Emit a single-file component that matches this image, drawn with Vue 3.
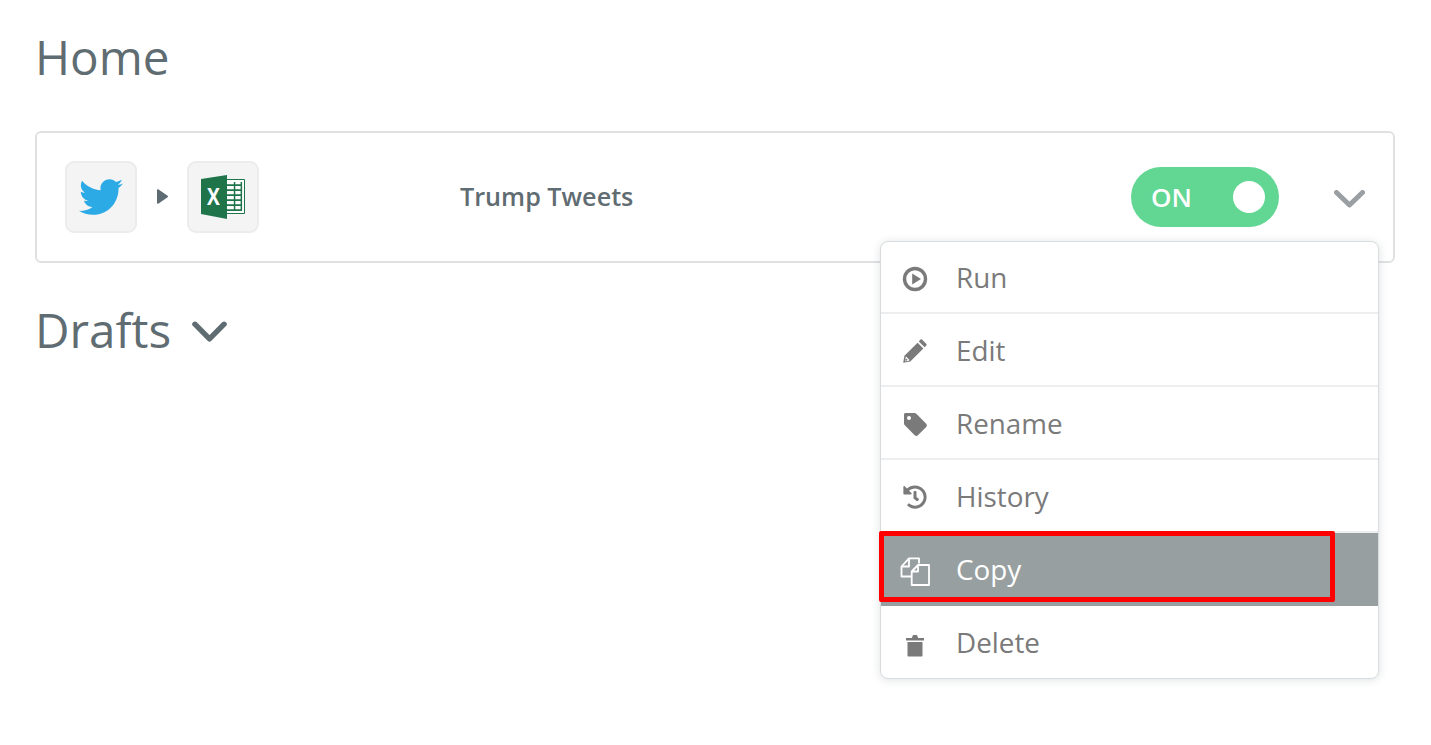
<template>
  <div class="page">
    <h1 class="title">Home</h1>

    <div class="card">
      <div class="apps">
        <div class="app-box">
          <svg class="twitter" viewBox="0 0 512 512"><path fill="#2caae6" d="M459.37 151.716c.325 4.548.325 9.097.325 13.645 0 138.72-105.583 298.558-298.558 298.558-59.452 0-114.68-17.219-161.137-47.106 8.447.974 16.568 1.299 25.34 1.299 49.055 0 94.213-16.568 130.274-44.832-46.132-.975-84.792-31.188-98.112-72.772 6.498.974 12.995 1.624 19.818 1.624 9.421 0 18.843-1.3 27.614-3.573-48.081-9.747-84.143-51.98-84.143-102.985v-1.299c13.969 7.797 30.214 12.67 47.431 13.319-28.264-18.843-46.781-51.005-46.781-87.391 0-19.492 5.197-37.36 14.294-52.954 51.655 63.675 129.3 105.258 216.365 109.807-1.624-7.797-2.599-15.918-2.599-24.04 0-57.828 46.782-104.934 104.934-104.934 30.213 0 57.502 12.67 76.67 33.137 23.715-4.548 46.456-13.645 66.599-25.34-7.798 24.366-24.366 44.833-46.132 57.827 21.117-2.273 41.584-8.122 60.426-16.243-14.292 20.791-32.161 39.308-52.628 54.253z"/></svg>
        </div>
        <svg class="arrow" viewBox="0 0 11 15"><path fill="#5f6b72" d="M0 1.2v12.6c0 .9.9 1.3 1.6.8L10.600 8.300c.5-.4.5-1.200 0-1.600L1.600.4C.9-.1 0 .3 0 1.200z"/></svg>
        <div class="app-box">
          <svg class="excel" viewBox="0 0 44 44">
            <path fill="#fff" stroke="#20744a" stroke-width="1" d="M24 4.500h19.500v34H24z"/>
            <path fill="#20744a" d="M26 9.300h15v1.600H26zM26 14.300h15v1.600H26zM26 19.300h15v1.600H26zM26 24.300h15v1.600H26zM26 29.300h15v1.600H26zM26 34.300h15v1.600H26zM32.800 7h1.500v28h-1.500zM39.600 7h1.500v28h-1.500z"/>
            <path fill="#20744a" d="M0 4 26 0v44L0 39z"/>
            <text x="0" y="0" transform="translate(12.500 29.500) scale(.8 1)" text-anchor="middle" class="excel-x">X</text>
          </svg>
        </div>
      </div>
      <div class="name">Trump Tweets</div>
      <div class="toggle">
        <span>ON</span>
        <i class="knob"></i>
      </div>
      <svg class="chevron" viewBox="0 0 31 18"><path d="M2.500 2.500 15.500 15 28.500 2.500" fill="none" stroke="#9a9fa3" stroke-width="5" stroke-linecap="round" stroke-linejoin="round"/></svg>

      <div class="menu">
        <div v-for="item in items" :key="item.label" class="row" :class="{ active: item.active }">
          <svg class="icon" viewBox="0 0 24 24" v-html="item.icon"></svg>
          <span>{{ item.label }}</span>
        </div>
        <div class="highlight"></div>
      </div>
    </div>

    <h2 class="drafts">
      Drafts
      <svg viewBox="0 0 36 22"><path d="M3 3 18 18 33 3" fill="none" stroke="#5f6c72" stroke-width="5.500" stroke-linecap="round" stroke-linejoin="round"/></svg>
    </h2>
  </div>
</template>

<script setup>
const items = [
  {
    label: 'Run',
    icon: '<circle cx="12" cy="12" r="10.500" fill="none" stroke="currentColor" stroke-width="3.400"/><path fill="currentColor" d="M9.200 6.400v11.200L18 12z"/>'
  },
  {
    label: 'Edit',
    icon: '<path fill="currentColor" d="M19 .6 23.400 5c.4.400.4 1 0 1.400l-1.800 1.800-5.800-5.800L17.600.6c.4-.4 1-.4 1.400 0zM14.600 3.700l5.800 5.800L7.300 22.600.2 23.800l1.200-7z"/><path fill="#fff" d="M3 17.500 6.500 21 5.400 21.900 2.100 22.300 2.500 18.800z"/><circle cx="3.300" cy="20.800" r="1" fill="currentColor"/>'
  },
  {
    label: 'Rename',
    icon: '<path fill="currentColor" fill-rule="evenodd" d="M2.500 1h9c.7 0 1.300.3 1.800.8l9.900 9.900c.9.900.9 2.300 0 3.200l-8.300 8.300c-.9.900-2.300.9-3.200 0L1.800 13.300C1.300 12.800 1 12.200 1 11.500v-9C1 1.700 1.700 1 2.500 1zM6 4a2 2 0 1 0 0 4 2 2 0 0 0 0-4z"/>'
  },
  {
    label: 'History',
    icon: '<g transform="scale(.0469)"><path fill="currentColor" d="M504 255.531c.253 136.64-111.18 248.372-247.82 248.468-59.015.042-113.223-20.53-155.822-54.911-11.077-8.94-11.905-25.541-1.839-35.607l11.267-11.267c8.609-8.609 22.353-9.551 31.891-1.984C173.062 425.135 212.781 440 256 440c101.705 0 184-82.311 184-184 0-101.705-82.311-184-184-184-48.814 0-93.149 18.969-126.068 49.932l50.754 50.754c10.08 10.08 2.941 27.314-11.313 27.314H24c-8.837 0-16-7.163-16-16V38.627c0-14.254 17.234-21.393 27.314-11.314l49.372 49.372C129.209 34.136 189.552 8 256 8c136.81 0 247.747 110.78 248 247.531zm-180.912 78.784l9.823-12.63c8.138-10.463 6.253-25.542-4.21-33.679L288 256.349V152c0-13.255-10.745-24-24-24h-16c-13.255 0-24 10.745-24 24v135.651l65.409 50.874c10.463 8.137 25.541 6.253 33.679-4.21z"/></g>'
  },
  {
    label: 'Copy',
    active: true,
    icon: '<path fill="none" stroke="currentColor" stroke-width="1.800" stroke-linejoin="round" d="M16 4.500V-.7H6L-1.500 7.500V17.500H8.700"/><path fill="none" stroke="currentColor" stroke-width="1.800" stroke-linejoin="round" d="M6 0V7.500H-1M8.700 26V12.500L15 6H26V26zM15 6.500V12.500H9"/>'
  },
  {
    label: 'Delete',
    icon: '<path fill="currentColor" d="M3 6h5.800l1-2.600c.1-.3.400-.5.700-.5h3c.3 0 .6.200.7.500l1 2.600H21v2.400H3zM4.500 10h15v13.500c0 .6-.4 1-1 1h-13c-.6 0-1-.4-1-1z"/>'
  }
]
</script>

<style scoped>
.page {
  min-height: 745px;
  box-sizing: border-box;
  padding: 25px 36px 0 35px;
  font-family: "Open Sans", sans-serif;
  color: #5f6c72;
}

.title {
  margin: 0 0 42px 0;
  font-size: 47.6px;
  font-weight: 400;
  line-height: 64px;
}

.card {
  position: relative;
  display: flex;
  align-items: center;
  height: 132px;
  box-sizing: border-box;
  padding: 0 28px 0 28px;
  border: 2px solid #dfe1e2;
  border-radius: 6px;
}

.apps {
  display: flex;
  align-items: center;
  width: 395px;
}

.app-box {
  display: flex;
  align-items: center;
  justify-content: center;
  width: 72px;
  height: 72px;
  box-sizing: border-box;
  background: #f4f4f4;
  border: 2px solid #ececec;
  border-radius: 9px;
}

.twitter {
  width: 44px;
  height: 44px;
}

.excel {
  width: 44px;
  height: 44px;
}

.excel-x {
  font-family: "Open Sans", sans-serif;
  font-weight: 700;
  font-size: 24px;
  fill: #fff;
}

.arrow {
  width: 11px;
  height: 15px;
  margin: -2px 19px 0 20px;
}

.name {
  flex: 1;
  font-size: 25.2px;
  font-weight: 600;
  margin-top: -2px;
}

.toggle {
  display: flex;
  align-items: center;
  justify-content: space-between;
  width: 148px;
  height: 60px;
  box-sizing: border-box;
  padding: 0 14px 0 20px;
  background: #62d693;
  border-radius: 30px;
  color: #fff;
  font-size: 26px;
  font-weight: 600;
}

.knob {
  width: 32px;
  height: 32px;
  background: #fff;
  border-radius: 50%;
}

.chevron {
  width: 31px;
  height: 18px;
  margin-left: 55px;
  margin-top: 3px;
}

.menu {
  position: absolute;
  top: 108px;
  right: 14px;
  width: 499px;
  box-sizing: border-box;
  background: #fff;
  border: 1px solid #d9dcde;
  border-radius: 8px;
  box-shadow: 0 1px 8px rgba(90, 100, 110, 0.2);
  color: #7a7a7a;
  font-size: 27.8px;
  z-index: 2;
}

.row {
  display: flex;
  align-items: center;
  height: 73px;
  box-sizing: border-box;
  padding-left: 22px;
  border-bottom: 2px solid #eceeef;
}

.row:first-child {
  height: 72px;
}

.row:nth-last-child(2) {
  height: 72px;
  border-bottom: none;
}

.row.active {
  background: #989fa1;
  color: #fff;
  border-bottom: none;
}

.row.active span {
  margin-top: -2px;
}

.icon {
  width: 24px;
  height: 24px;
  margin: 3px 29px 0 0;
  flex-shrink: 0;
  overflow: visible;
}

.highlight {
  position: absolute;
  left: -2px;
  top: 289px;
  width: 456px;
  height: 71px;
  box-sizing: border-box;
  border: 5px solid #fe0000;
  border-radius: 2px;
}

.drafts {
  display: flex;
  align-items: center;
  margin: 31px 0 0 0;
  font-size: 47.6px;
  font-weight: 400;
  line-height: 72px;
}

.drafts svg {
  width: 35px;
  height: 22px;
  margin-left: 21px;
  margin-top: 4px;
}
</style>

<style>
body {
  background: #fff;
}
</style>
